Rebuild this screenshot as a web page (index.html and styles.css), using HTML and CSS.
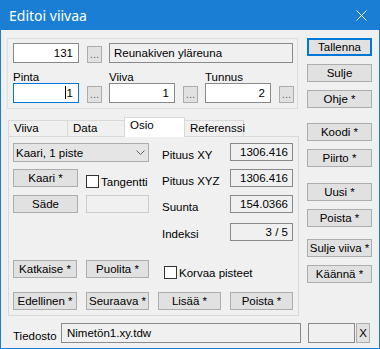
FILE: index.html
```html
<!DOCTYPE html>
<html lang="fi">

<head>
    <meta charset="UTF-8">
    <meta name="viewport" content="width=device-width, initial-scale=1.0">
    <title>Editoi viivaa</title>
    <link rel="stylesheet" href="styles.css">
</head>

<body>
    <div class="window">
        <header class="titlebar">
            <span class="title">Editoi viivaa</span>
            <span class="close">
                <svg width="11" height="11" viewBox="0 0 11 11">
                    <path d="M0.5 0.5L10.5 10.5M10.5 0.5L0.5 10.5" stroke="#fff" stroke-width="1" fill="none" />
                </svg>
            </span>
        </header>

        <div class="client">
            <div class="main">
                <div class="left">
                    <!-- ylaosan ryhma -->
                    <div class="group">
                        <div class="group-row">
                            <div class="field">
                                <span class="edit num">131</span>
                                <button class="dots">...</button>
                            </div>
                            <span class="edit ro name">Reunakiven yläreuna</span>
                        </div>
                        <div class="group-row group-fields">
                            <div class="labeled">
                                <label>Pinta</label>
                                <div class="field">
                                    <span class="edit num focus"><i class="caret"></i>1</span>
                                    <button class="dots">...</button>
                                </div>
                            </div>
                            <div class="labeled">
                                <label>Viiva</label>
                                <div class="field">
                                    <span class="edit num">1</span>
                                    <button class="dots">...</button>
                                </div>
                            </div>
                            <div class="labeled">
                                <label>Tunnus</label>
                                <div class="field">
                                    <span class="edit num">2</span>
                                    <button class="dots">...</button>
                                </div>
                            </div>
                        </div>
                    </div>

                    <!-- valilehdet -->
                    <div class="tabs">
                        <div class="tab tab-viiva">Viiva</div>
                        <div class="tab tab-data">Data</div>
                        <div class="tab tab-osio active">Osio</div>
                        <div class="tab tab-ref">Referenssi</div>
                    </div>

                    <div class="panel">
                        <div class="osio">
                            <div class="combo">
                                <span>Kaari, 1 piste</span>
                                <svg width="9" height="5" viewBox="0 0 9 5">
                                    <path d="M0.5 0.5L4.5 4.5L8.5 0.5" stroke="#606060" fill="none" />
                                </svg>
                            </div>
                            <span class="lbl">Pituus XY</span>
                            <span class="value">1306.416</span>

                            <button class="btn">Kaari *</button>
                            <label class="check"><i class="box"></i>Tangentti</label>
                            <span class="lbl">Pituus XYZ</span>
                            <span class="value">1306.416</span>

                            <button class="btn">Säde</button>
                            <span class="value disabled"></span>
                            <span class="lbl">Suunta</span>
                            <span class="value">154.0366</span>

                            <span class="lbl indeksi">Indeksi</span>
                            <span class="value">3 / 5</span>
                        </div>

                        <div class="actions">
                            <button class="btn">Katkaise *</button>
                            <button class="btn">Puolita *</button>
                            <label class="check korvaa"><i class="box"></i>Korvaa pisteet</label>
                            <button class="btn">Edellinen *</button>
                            <button class="btn">Seuraava *</button>
                            <button class="btn">Lisää *</button>
                            <button class="btn">Poista *</button>
                        </div>
                    </div>
                </div>

                <!-- oikean reunan painikkeet -->
                <div class="side">
                    <button class="btn default">Tallenna</button>
                    <button class="btn">Sulje</button>
                    <button class="btn">Ohje *</button>
                    <button class="btn sep-koodi">Koodi *</button>
                    <button class="btn">Piirto *</button>
                    <button class="btn sep-uusi">Uusi *</button>
                    <button class="btn">Poista *</button>
                    <button class="btn sep-sulje">Sulje viiva *</button>
                    <button class="btn">Käännä *</button>
                </div>
            </div>

            <div class="file-row">
                <span class="file-label">Tiedosto</span>
                <span class="edit ro file-name">Nimetön1.xy.tdw</span>
                <span class="edit ro file-extra"></span>
                <button class="btn file-clear">X</button>
            </div>
        </div>
    </div>
</body>

</html>
```

FILE: styles.css
```css
body {
    margin: 0;
    font-family: "Liberation Sans", Arial, sans-serif;
    font-size: 11.5px;
    color: #000;
}

.window {
    width: 380px;
    height: 349px;
    box-sizing: border-box;
    padding: 0 1px 1px;
    background-color: #1a7fd4;
    display: flex;
    flex-direction: column;
}

.titlebar {
    flex: none;
    height: 30px;
    display: flex;
    align-items: center;
    justify-content: space-between;
    padding: 0 12px 0 8px;
    color: #fff;
}

.title {
    font-family: "Noto Sans", sans-serif;
    font-size: 14px;
}

.close svg {
    display: block;
}

.client {
    flex: 1;
    background-color: #f0f0f0;
    padding: 8px 0 0 6px;
}

.main {
    display: flex;
    gap: 8px;
}

.left {
    width: 292px;
}

/* painikkeet */
.btn {
    box-sizing: border-box;
    height: 18px;
    padding: 0;
    border: 1px solid #adadad;
    background-color: #e1e1e1;
    font: inherit;
    line-height: 16px;
    color: #000;
    white-space: nowrap;
}

.dots {
    box-sizing: border-box;
    width: 15px;
    height: 17px;
    padding: 0;
    border: 1px solid #adadad;
    background-color: #e1e1e1;
    font: inherit;
    line-height: 15px;
    color: #6d6d6d;
}

/* tekstikentat */
.edit {
    box-sizing: border-box;
    display: block;
    height: 20px;
    border: 1px solid #8a8a8a;
    background-color: #fff;
    line-height: 18px;
    padding: 0 5px;
    white-space: nowrap;
}

.edit.num {
    width: 66px;
    text-align: right;
}

.edit.ro {
    background-color: #f0f0f0;
}

.edit.focus {
    border-color: #0078d7;
}

.caret {
    display: inline-block;
    width: 1px;
    height: 13px;
    margin-right: 1px;
    vertical-align: -2px;
    background-color: #000;
}

.group {
    box-sizing: border-box;
    width: 291px;
    height: 71px;
    border: 1px solid #dcdcdc;
    padding: 4px 4px 0 5px;
}

.group-row {
    display: flex;
    gap: 7px;
}

.group-fields {
    margin-top: 8px;
}

.field {
    display: flex;
    align-items: flex-end;
    gap: 8px;
}

.edit.name {
    width: 184px;
    padding-left: 4px;
}

.labeled label {
    display: block;
    line-height: 12px;
}

/* valilehdet */
.tabs {
    display: flex;
    align-items: flex-end;
    height: 19px;
    margin: 8px 0 0 1px;
}

.tab {
    box-sizing: border-box;
    height: 16px;
    margin-right: -1px;
    padding-left: 5px;
    border: 1px solid #d9d9d9;
    border-bottom: 0;
    background-color: #f0f0f0;
    line-height: 15px;
}

.tab-viiva { width: 60px; }
.tab-data { width: 58px; }
.tab-osio { width: 61px; }
.tab-ref { width: 60px; }

.tab.active {
    position: relative;
    z-index: 1;
    height: 20px;
    margin-bottom: -1px;
    background-color: #fff;
    line-height: 14px;
}

.panel {
    box-sizing: border-box;
    width: 291px;
    height: 180px;
    margin-left: 1px;
    border: 1px solid #d9d9d9;
    padding: 6px 4px 5px;
    display: flex;
    flex-direction: column;
    justify-content: space-between;
}

.osio {
    display: grid;
    grid-template-columns: 64px 63px 63px 63px;
    grid-template-rows: 19px 19px 21px 19px;
    column-gap: 9px;
    row-gap: 7px;
    align-items: start;
}

.combo {
    grid-column: 1 / 3;
    box-sizing: border-box;
    height: 19px;
    display: flex;
    align-items: center;
    justify-content: space-between;
    padding: 0 3px 0 2px;
    border: 1px solid #acacac;
    background-color: #e5e5e5;
}

.combo svg {
    display: block;
}

.lbl {
    grid-column: 3;
    padding: 5px 0 0 4px;
    line-height: 14px;
    white-space: nowrap;
}

.lbl.indeksi {
    padding-top: 4px;
}

.value {
    box-sizing: border-box;
    height: 18px;
    padding-right: 4px;
    border: 1px solid #8a8a8a;
    background-color: #f0f0f0;
    line-height: 16px;
    text-align: right;
}

.value.disabled {
    border-color: #cccccc;
}

.osio .btn {
    width: 65px;
}

.check {
    display: flex;
    align-items: center;
    gap: 2px;
    align-self: end;
    white-space: nowrap;
}

.box {
    box-sizing: border-box;
    width: 13px;
    height: 13px;
    border: 1px solid #333;
    background-color: #fff;
}

.actions {
    display: grid;
    grid-template-columns: 64px 63px 63px 63px;
    grid-template-rows: 18px 18px;
    column-gap: 9px;
    row-gap: 14px;
}

.korvaa {
    grid-column: 3 / 5;
    margin-left: 6px;
    margin-bottom: -1px;
}

/* oikea sarake */
.side {
    width: 65px;
    display: flex;
    flex-direction: column;
    gap: 8px;
}

.btn.default {
    border-color: #0078d7;
    box-shadow: inset 0 0 0 1px #0078d7;
}

.sep-koodi {
    margin-top: 7px;
}

.sep-uusi {
    margin-top: 8px;
}

.sep-sulje {
    margin-top: 4px;
}

/* alarivi */
.file-row {
    display: flex;
    height: 20px;
    margin-top: 7px;
}

.file-label {
    width: 48px;
    margin-left: 6px;
    align-self: flex-end;
    line-height: 14px;
}

.edit.file-name {
    width: 240px;
}

.edit.file-extra {
    width: 47px;
    margin-left: 7px;
}

.btn.file-clear {
    width: 14px;
    height: 20px;
    margin-left: 1px;
    line-height: 18px;
}
```
